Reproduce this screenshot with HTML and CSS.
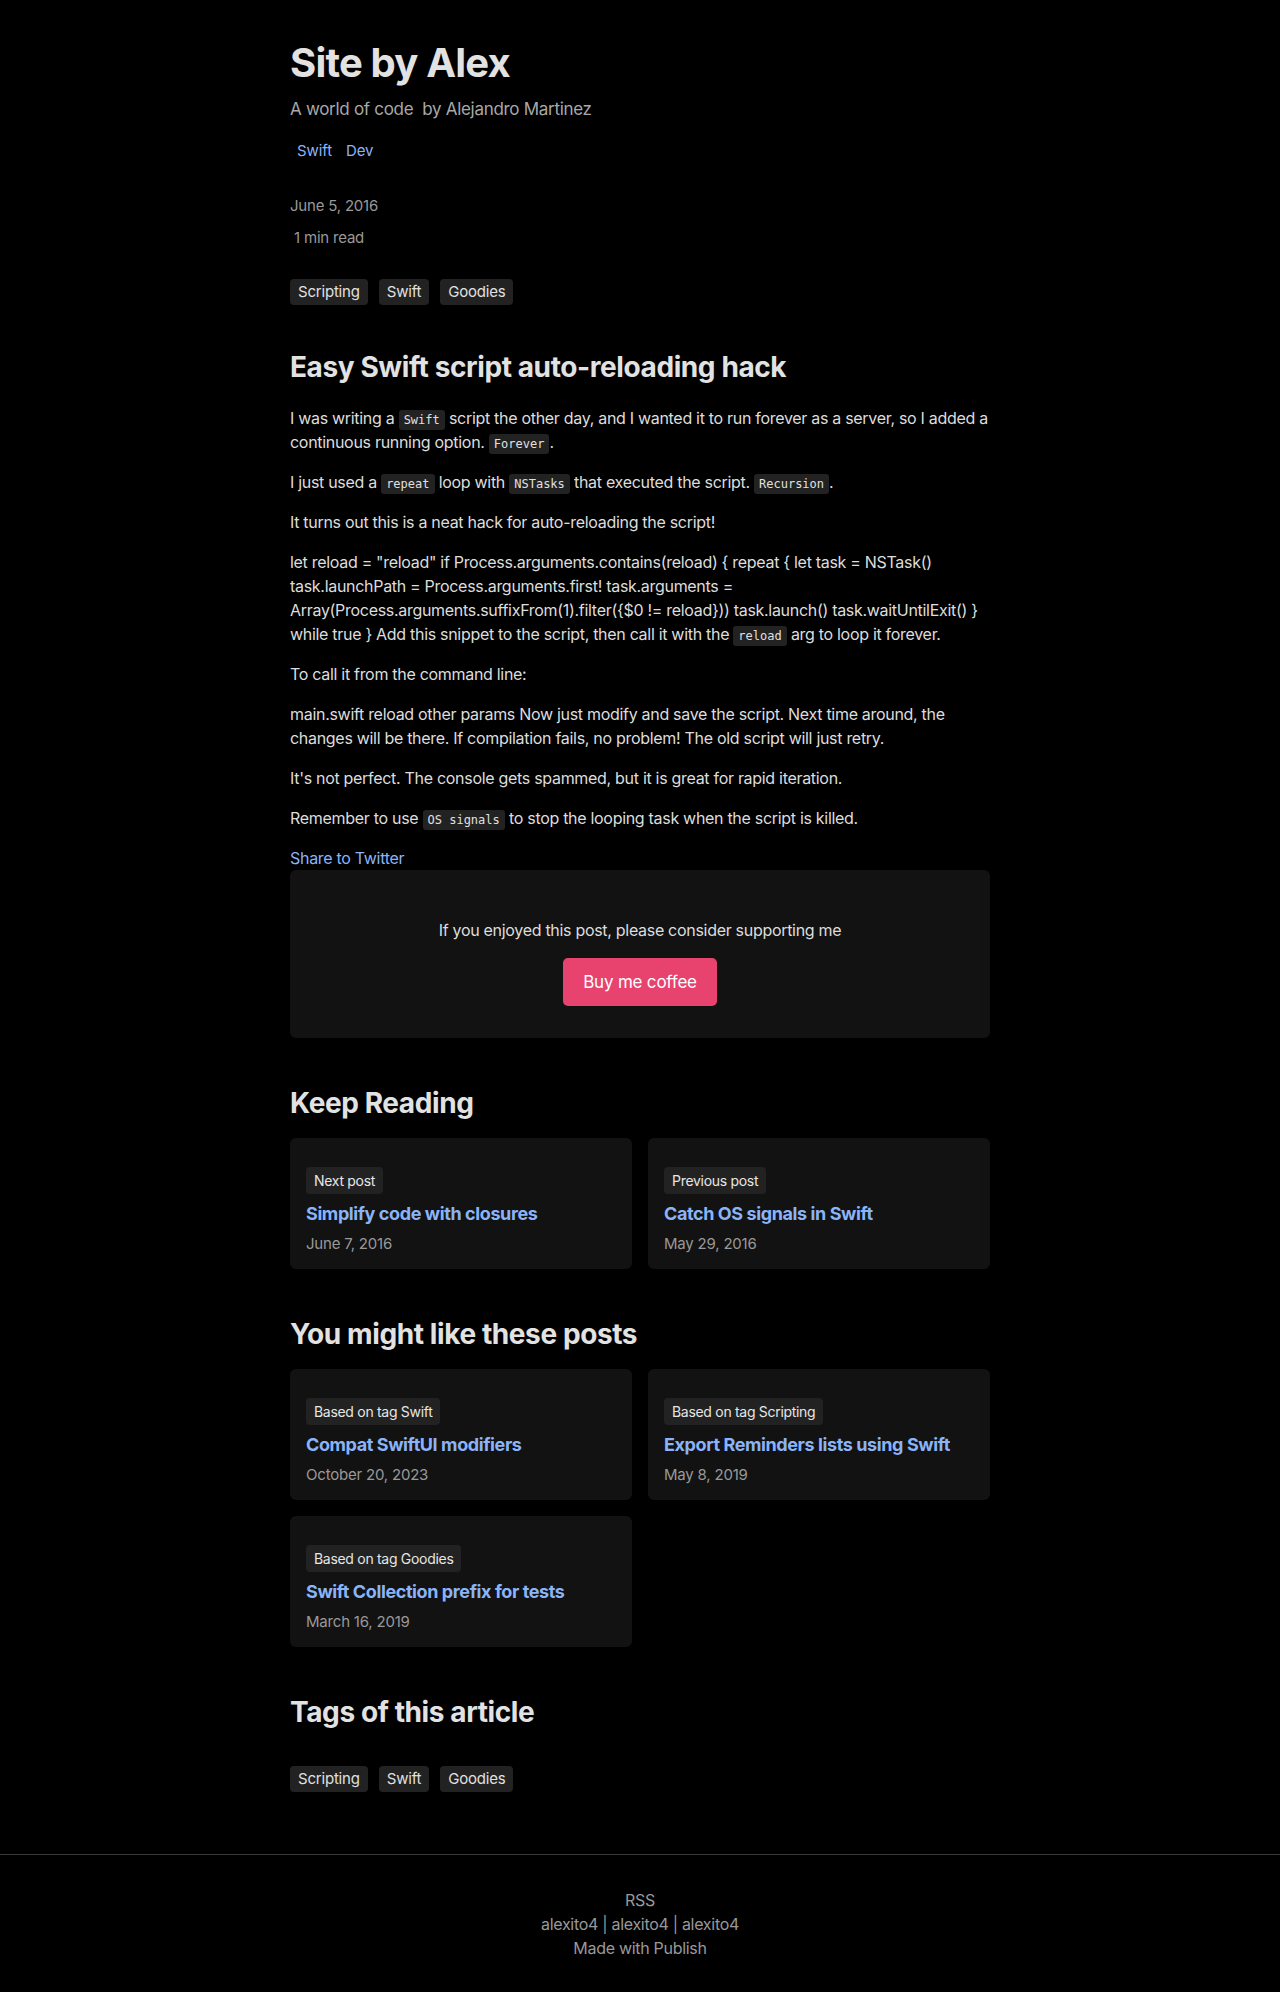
FILE: index.html
```html
<!DOCTYPE html>
<html lang="en">
<head>
<meta charset="utf-8">
<title>Easy Swift script auto-reloading hack | Site by Alex</title>
<link rel="stylesheet" href="styles.css">
</head>
<body>
<div class="wrapper">
  <header class="site-header">
    <h1 class="site-title">Site by Alex</h1>
    <p class="site-subtitle">A world of code&nbsp; by Alejandro Martinez</p>
    <nav class="site-nav">
      <a href="#">Swift</a>
      <a href="#">Dev</a>
    </nav>
  </header>

  <div class="meta">
    <div class="meta-date">June 5, 2016</div>
    <div class="meta-read">&nbsp;1 min read</div>
  </div>

  <ul class="tag-list">
    <li><a href="#">Scripting</a></li>
    <li><a href="#">Swift</a></li>
    <li><a href="#">Goodies</a></li>
  </ul>

  <article class="content">
    <h2 class="post-title">Easy Swift script auto-reloading hack</h2>
    <p>I was writing a <code>Swift</code> script the other day, and I wanted it to run forever as a server, so I added a continuous running option. <code>Forever</code>.</p>
    <p>I just used a <code>repeat</code> loop with <code>NSTasks</code> that executed the script. <code>Recursion</code>.</p>
    <p>It turns out this is a neat hack for auto-reloading the script!</p>
    <p>let reload = "reload" if Process.arguments.contains(reload) { repeat { let task = NSTask() task.launchPath = Process.arguments.first! task.arguments = Array(Process.arguments.suffixFrom(1).filter({$0 != reload})) task.launch() task.waitUntilExit() } while true } Add this snippet to the script, then call it with the <code>reload</code> arg to loop it forever.</p>
    <p>To call it from the command line:</p>
    <p>main.swift reload other params Now just modify and save the script. Next time around, the changes will be there. If compilation fails, no problem! The old script will just retry.</p>
    <p>It's not perfect. The console gets spammed, but it is great for rapid iteration.</p>
    <p>Remember to use <code>OS signals</code> to stop the looping task when the script is killed.</p>
    <a class="share" href="#">Share to Twitter</a>
  </article>

  <div class="support">
    <p>If you enjoyed this post, please consider supporting me</p>
    <a class="coffee" href="#">Buy me coffee</a>
  </div>

  <section class="section">
    <h2 class="section-title">Keep Reading</h2>
    <div class="card-grid">
      <a class="card" href="#">
        <span class="card-label">Next post</span>
        <span class="card-title">Simplify code with closures</span>
        <span class="card-date">June 7, 2016</span>
      </a>
      <a class="card" href="#">
        <span class="card-label">Previous post</span>
        <span class="card-title">Catch OS signals in Swift</span>
        <span class="card-date">May 29, 2016</span>
      </a>
    </div>
  </section>

  <section class="section">
    <h2 class="section-title">You might like these posts</h2>
    <div class="card-grid">
      <a class="card" href="#">
        <span class="card-label">Based on tag Swift</span>
        <span class="card-title">Compat SwiftUI modifiers</span>
        <span class="card-date">October 20, 2023</span>
      </a>
      <a class="card" href="#">
        <span class="card-label">Based on tag Scripting</span>
        <span class="card-title">Export Reminders lists using Swift</span>
        <span class="card-date">May 8, 2019</span>
      </a>
      <a class="card" href="#">
        <span class="card-label">Based on tag Goodies</span>
        <span class="card-title">Swift Collection prefix for tests</span>
        <span class="card-date">March 16, 2019</span>
      </a>
    </div>
  </section>

  <section class="section">
    <h2 class="section-title tags-title">Tags of this article</h2>
    <ul class="tag-list">
      <li><a href="#">Scripting</a></li>
      <li><a href="#">Swift</a></li>
      <li><a href="#">Goodies</a></li>
    </ul>
  </section>
</div>

<footer class="site-footer">
  <p><a href="#">RSS</a></p>
  <p><a href="#">alexito4</a> | <a href="#">alexito4</a> | <a href="#">alexito4</a></p>
  <p>Made with <a href="#">Publish</a></p>
</footer>
</body>
</html>
```

FILE: styles.css
```css
* {
  box-sizing: border-box;
}

html, body {
  margin: 0;
  padding: 0;
  background: #000;
}

body {
  font-family: Inter, "Liberation Sans", sans-serif;
  color: #dddddd;
  font-size: 16px;
  line-height: 24px;
  letter-spacing: -0.3px;
}

a {
  text-decoration: none;
  color: #8ab4f8;
}

.wrapper {
  width: 700px;
  margin: 0 auto;
  padding-top: 39px;
  padding-bottom: 62px;
}

.site-title {
  margin: 0;
  font-size: 40px;
  line-height: 48px;
  font-weight: 700;
  letter-spacing: -0.8px;
  color: #e2e2e2;
}

.site-subtitle {
  margin: 9px 0 0;
  font-size: 17px;
  line-height: 27px;
  letter-spacing: -0.3px;
  color: #a8a8a8;
}

.site-nav {
  margin-top: 17px;
  display: flex;
  font-size: 15px;
  line-height: 22px;
  letter-spacing: -0.1px;
}

.site-nav a {
  padding: 0 7px;
  color: #8ab4f8;
}

.meta {
  margin-top: 33px;
  font-size: 15px;
  line-height: 22px;
  letter-spacing: -0.2px;
  color: #999;
}

.meta-read {
  margin-top: 10px;
}

.tag-list {
  list-style: none;
  margin: 30px 0 0;
  padding: 0;
  display: flex;
  gap: 11px;
}

.tag-list a {
  display: block;
  background: #222;
  color: #e0e0e0;
  font-size: 15px;
  line-height: 22px;
  letter-spacing: -0.2px;
  padding: 2px 8px;
  border-radius: 4px;
}

.content {
  margin-top: 46px;
}

.post-title {
  margin: 0 0 23px;
  font-size: 28px;
  line-height: 32px;
  font-weight: 700;
  letter-spacing: -0.4px;
  color: #e2e2e2;
}

.content p {
  margin: 0 0 16px;
}

code {
  font-family: "DejaVu Sans Mono", "Liberation Mono", monospace;
  font-size: 12px;
  line-height: 1;
  letter-spacing: 0;
  background: #222;
  color: #e0e0e0;
  padding: 3px 5px;
  border-radius: 3px;
}

.share {
  display: block;
  line-height: 24px;
}

.support {
  background: #121212;
  border-radius: 6px;
  padding: 32px 24px;
  text-align: center;
}

.support p {
  margin: 16px 0;
  color: #dddddd;
}

.coffee {
  display: inline-block;
  background: #e8426f;
  color: #fff;
  font-size: 17px;
  line-height: 24px;
  letter-spacing: -0.2px;
  padding: 12px 20px;
  border-radius: 5px;
}

.section {
  margin-top: 48px;
}

.section-title {
  margin: 0 0 18px;
  font-size: 28px;
  line-height: 34px;
  font-weight: 700;
  letter-spacing: -0.4px;
  color: #e2e2e2;
}

.tags-title {
  margin-bottom: 37px;
}

.section .tag-list {
  margin-top: 0;
}

.card-grid {
  display: grid;
  grid-template-columns: 1fr 1fr;
  gap: 16px;
}

.card {
  display: flex;
  flex-direction: column;
  align-items: flex-start;
  background: #121212;
  border-radius: 6px;
  padding: 29px 16px 14px;
}

.card-label {
  display: block;
  background: #222;
  color: #e6e6e6;
  font-size: 14px;
  line-height: 21px;
  letter-spacing: -0.3px;
  padding: 3px 8px;
  border-radius: 4px;
}

.card-title {
  display: block;
  margin-top: 6px;
  font-size: 18px;
  line-height: 27px;
  font-weight: 700;
  letter-spacing: -0.4px;
  color: #8ab4f8;
}

.card-date {
  display: block;
  margin-top: 6px;
  font-size: 15px;
  line-height: 22px;
  letter-spacing: -0.2px;
  color: #999;
}

.site-footer {
  border-top: 1px solid #3a3a3a;
  padding: 33px 0 32px;
  text-align: center;
  color: #999;
  font-size: 16px;
  line-height: 24px;
}

.site-footer p {
  margin: 0;
}

.site-footer a {
  color: #999;
}
```
